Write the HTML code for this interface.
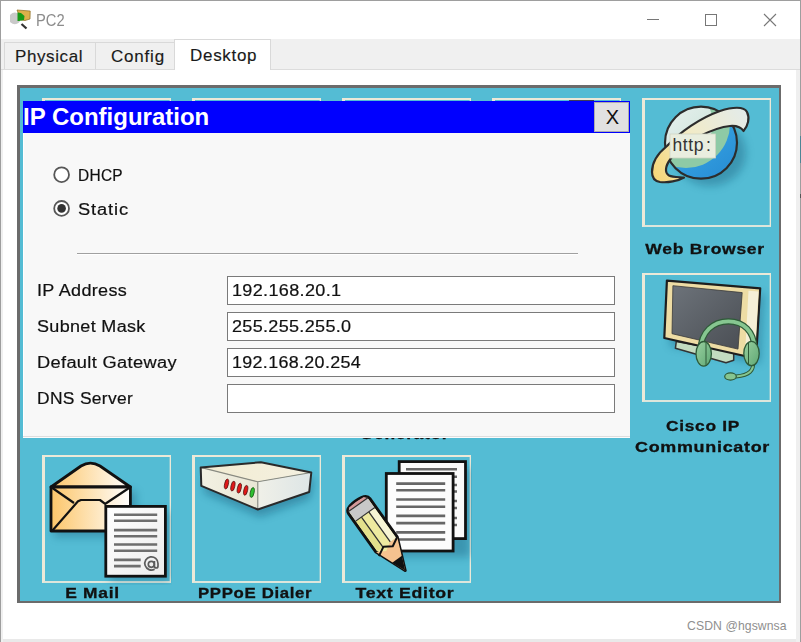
<!DOCTYPE html>
<html><head><meta charset="utf-8">
<style>
html,body{margin:0;padding:0;}
body{width:801px;height:642px;overflow:hidden;position:relative;background:#fff;font-family:"Liberation Sans",sans-serif;}
.a{position:absolute;}
#wl{left:0;top:0;width:1px;height:642px;background:#9e9e9e;}
#wt{left:0;top:0;width:801px;height:1px;background:#9e9e9e;}
#wr{left:800px;top:0;width:1px;height:642px;background:#9e9e9e;}
#wb{left:1px;top:639px;width:799px;height:3px;background:#e9e9e9;}
#wr2{left:796px;top:70px;width:4px;height:572px;background:#efefef;}
#wl2{left:1px;top:70px;width:2px;height:572px;background:#f0f0f0;}
#title{left:36px;top:12px;font-size:16px;color:#8c8c8c;transform:scaleX(0.92);transform-origin:0 50%;}
#tabbar{left:1px;top:39px;width:799px;height:31px;background:#f0f0f0;box-sizing:border-box;border-bottom:1px solid #dcdcdc;}
.tab{box-sizing:border-box;border:1px solid #d9d9d9;border-bottom:none;background:#f0f0f0;font-size:17px;color:#1a1a1a;letter-spacing:0.4px;-webkit-text-stroke:0.15px #1a1a1a;}
#content{left:1px;top:70px;width:799px;height:569px;background:#fff;}
#panel{left:17px;top:85px;width:764px;height:518px;box-sizing:border-box;border:2px solid #6b6b6b;border-left-width:3px;border-top-width:3px;background:#54bcd4;}
.fr{box-sizing:border-box;width:129px;height:129px;border:2px solid #ece9d8;border-left-width:3px;border-right-width:1px;border-bottom-color:#dde6dc;box-shadow:inset -1px 0 0 rgba(236,233,216,0.35);}
.lbl{font-weight:bold;font-size:15px;color:#111;letter-spacing:0.6px;text-align:center;white-space:nowrap;-webkit-text-stroke:0.3px #111;}
.lbl span{display:inline-block;transform-origin:50% 50%;}
#dlg{left:23px;top:101px;width:607px;height:336px;background:#f8f8f8;box-sizing:border-box;border-bottom:1px solid #dedede;box-shadow:0 1px 0 #fcfcfc, inset 1px 0 0 #fff;}
#dtitle{left:0;top:0;width:607px;height:32px;background:#0000ff;}
#dtt{left:0px;top:2px;font-size:24px;font-weight:bold;color:#fff;}
#xb{left:571px;top:1px;width:35px;height:30px;box-sizing:border-box;padding-left:2px;background:#e1e1e1;border:1px solid #adadad;font-size:20px;color:#111;text-align:center;line-height:29px;}
.rl{font-size:16px;color:#111;letter-spacing:0.3px;-webkit-text-stroke:0.2px #111;white-space:nowrap;transform-origin:0 50%;}
.inp{box-sizing:border-box;left:204px;width:388px;height:29px;background:#fff;border:1px solid #7a7a7a;font-size:16px;color:#111;padding-left:4px;line-height:27px;}
.inp span{display:inline-block;letter-spacing:0.3px;-webkit-text-stroke:0.2px #111;transform-origin:0 50%;}
</style></head><body>
<div class="a" id="content"></div>
<div class="a" id="wl"></div><div class="a" id="wt"></div><div class="a" id="wr"></div><div class="a" id="wb"></div><div class="a" id="wr2"></div><div class="a" id="wl2"></div><div class="a" style="left:800px;top:136px;width:1px;height:27px;background:#4d8595"></div><div class="a" style="left:800px;top:194px;width:1px;height:4px;background:#555"></div>
<!-- app icon -->
<svg class="a" style="left:10px;top:9px" width="22" height="22" viewBox="0 0 22 22">
  <circle cx="4.8" cy="9.4" r="5.8" fill="#c9c9c9"/>
  <line x1="11.5" y1="15" x2="16.5" y2="19.5" stroke="#333" stroke-width="2.3"/>
  <path d="M7,1 L20.2,2 L20,10 L15,11.5 L11,11 Z" fill="#dcb04a" stroke="#8a6a20" stroke-width="0.7"/>
  <path d="M7.5,3.5 L11,4 L14.5,7 L14,11 L9,12 L7.5,12 Z" fill="#169a16"/>
</svg>
<div class="a" id="title">PC2</div>
<!-- window controls -->
<div class="a" style="left:647px;top:19px;width:12px;height:1px;background:#777"></div>
<div class="a" style="left:705px;top:14px;width:12px;height:12px;box-sizing:border-box;border:1px solid #777"></div>
<svg class="a" style="left:763px;top:13px" width="14" height="14" viewBox="0 0 14 14"><path d="M1 1 L13 13 M13 1 L1 13" stroke="#777" stroke-width="1.1"/></svg>
<!-- tabs -->
<div class="a" id="tabbar"></div>
<div class="a tab" style="left:4px;top:42px;width:92px;height:27px;"><span class="a" style="left:10px;top:4px;letter-spacing:0.6px">Physical</span></div>
<div class="a tab" style="left:95px;top:42px;width:80px;height:27px;"><span class="a" style="left:15px;top:4px;letter-spacing:0.8px">Config</span></div>
<div class="a tab" style="left:174px;top:39px;width:97px;height:31px;background:#fff;"><span class="a" style="left:15px;top:6px;letter-spacing:0.7px">Desktop</span></div>

<!-- desktop panel -->
<div class="a" id="panel"></div>
<!-- frames row1 -->
<div class="a fr" style="left:42px;top:98px"></div>
<div class="a fr" style="left:192px;top:98px"></div>
<div class="a fr" style="left:342px;top:98px"></div>
<div class="a fr" style="left:492px;top:98px"></div>
<div class="a fr" style="left:642px;top:98px"></div>
<!-- row2 -->
<div class="a fr" style="left:642px;top:273px"></div>
<!-- row3 -->
<div class="a fr" style="left:42px;top:455px;height:128px"></div>
<div class="a fr" style="left:192px;top:455px;height:128px"></div>
<div class="a fr" style="left:342px;top:455px;height:128px"></div>


<!-- ICONS -->
<svg class="a" style="left:640px;top:96px" width="132" height="132" viewBox="0 0 132 132">
<defs>
 <clipPath id="gclip"><circle cx="61" cy="46.7" r="36"/></clipPath>
 <linearGradient id="gblue" x1="0.3" y1="0.3" x2="0.9" y2="1"><stop offset="0" stop-color="#3aa6e4"/><stop offset="1" stop-color="#1576c6"/></linearGradient>
 <linearGradient id="glight" x1="0" y1="0" x2="1" y2="1"><stop offset="0" stop-color="#f2f6f6"/><stop offset="1" stop-color="#c9e2d8"/></linearGradient>
 <linearGradient id="gsw" gradientUnits="userSpaceOnUse" x1="12" y1="81" x2="107" y2="16"><stop offset="0" stop-color="#f6d676"/><stop offset="0.5" stop-color="#f1ebc8"/><stop offset="1" stop-color="#e3ebea"/></linearGradient>
 <filter id="blur4" x="-50%" y="-50%" width="200%" height="200%"><feGaussianBlur stdDeviation="4"/></filter>
</defs>
<ellipse cx="70" cy="57" rx="36" ry="33" fill="#0b4f70" opacity="0.35" filter="url(#blur4)"/>
<g clip-path="url(#gclip)">
 <rect x="0" y="0" width="132" height="132" fill="url(#gblue)"/>
 <circle cx="46" cy="28" r="44" fill="#8ecaa6"/>
 <circle cx="41" cy="27" r="32" fill="url(#glight)"/>
</g>
<circle cx="61" cy="46.7" r="36" fill="none" stroke="#2c2c2c" stroke-width="2.2"/>
<path d="M12,76 C12,66 17,58 27,50 C40,36 60,22 80,15 C92,11 104,10 107,16 C110,22 108,30 103.5,35 C101,31 97,29.5 90,30 C80,31 70,35 60,40 C48,46 36,54 30.7,62.7 C25,70 24.5,77 29,79.5 C33,81.5 40,81 44,81.5 C38,85 28,87 20,86 C14,85 12,81 12,76 Z" fill="url(#gsw)" stroke="#2c2c2c" stroke-width="2.2" stroke-linejoin="round"/>
<rect x="30" y="38" width="45.5" height="24" fill="#e9eedf" stroke="#cfd4c4" stroke-width="0.8"/>
<text x="32.5" y="55.2" font-family="Liberation Sans" font-size="17.5" fill="#333" letter-spacing="0.6">http<tspan dx="2">:</tspan></text>
</svg>

<svg class="a" style="left:640px;top:272px" width="132" height="132" viewBox="0 0 132 132">
<defs>
 <linearGradient id="scr" x1="0" y1="0" x2="1" y2="1"><stop offset="0" stop-color="#6d737a"/><stop offset="1" stop-color="#4a4e54"/></linearGradient>
 <linearGradient id="hs" x1="0" y1="0" x2="1" y2="1"><stop offset="0" stop-color="#9ad0a0"/><stop offset="1" stop-color="#5fa874"/></linearGradient>
</defs>
<path d="M30,14 L124,22 L120,92 L30,74 Z" fill="#0b4f70" opacity="0.35" filter="url(#blur4)"/>
<path d="M36.3,69.4 L35.4,76.3 L86,90.8 L93.7,88.2 L93.7,80 Z" fill="#c2dcc0" stroke="#333" stroke-width="1.5" stroke-linejoin="round"/>
<path d="M26.9,8.6 L120.2,16.3 L116,86.5 L24.3,66 Z" fill="#eddca4" stroke="#1e1e1e" stroke-width="2.2" stroke-linejoin="round"/>
<path d="M108.5,18.8 L118.5,19.6 L114.7,84.6 L105,82.6 Z" fill="#f5efd6"/>
<path d="M32.9,13.7 L102.2,20.6 L98,77.1 L32,61.7 Z" fill="url(#scr)" stroke="#3a3a3a" stroke-width="0.8"/>
<path d="M60.5,78 C61,60 73,49.3 88.5,49.3 C104,49.3 114,60 114.5,76" fill="none" stroke="#2e5a38" stroke-width="6.2" stroke-linecap="round"/>
<path d="M60.5,78 C61,60 73,49.3 88.5,49.3 C104,49.3 114,60 114.5,76" fill="none" stroke="#86c690" stroke-width="3.8" stroke-linecap="round"/>
<path d="M113,90 C114,98 110,103 96,104.5" fill="none" stroke="#2e5a38" stroke-width="4"/>
<path d="M113,90 C114,98 110,103 96,104.5" fill="none" stroke="#86c690" stroke-width="2"/>
<ellipse cx="90.5" cy="104.5" rx="5.8" ry="3.6" fill="#86c690" stroke="#2e5a38" stroke-width="1.2"/>
<ellipse cx="63.7" cy="81.8" rx="7.7" ry="12.3" fill="url(#hs)" stroke="#2e5a38" stroke-width="1.3"/>
<path d="M66,71 L66,94" stroke="#2e5a38" stroke-width="1"/>
<ellipse cx="111.5" cy="81.5" rx="7.7" ry="12.2" fill="url(#hs)" stroke="#2e5a38" stroke-width="1.3"/>
<path d="M108.5,70.5 L108.5,93" stroke="#2e5a38" stroke-width="1"/>
</svg>

<svg class="a" style="left:40px;top:453px" width="132" height="132" viewBox="0 0 132 132">
<defs>
 <linearGradient id="env" x1="0" y1="0" x2="1" y2="0"><stop offset="0" stop-color="#fcc66a"/><stop offset="1" stop-color="#ffffff"/></linearGradient>
 <linearGradient id="doc" x1="0" y1="0" x2="1" y2="1"><stop offset="0" stop-color="#ffffff"/><stop offset="1" stop-color="#ececec"/></linearGradient>
</defs>
<path d="M14,38 L96,38 L96,84 L14,84 Z" fill="#0b4f70" opacity="0.35" filter="url(#blur4)"/>
<path d="M70,58 L130,58 L130,128 L70,128 Z" fill="#0b4f70" opacity="0.35" filter="url(#blur4)"/>
<path d="M11,34 L41,13 Q50.4,7.2 60,13 L90.4,34 Z" fill="url(#env)" stroke="#111" stroke-width="2.8" stroke-linejoin="round"/>
<rect x="11" y="34" width="79.4" height="44" fill="url(#env)" stroke="#111" stroke-width="2.8" stroke-linejoin="round"/>
<path d="M11,34 L34,50 M90.5,34 L65,51 M12,78 L38,48.3 L41,47 L60,47 L65.8,51.4" fill="none" stroke="#111" stroke-width="2.2" stroke-linejoin="round"/>
<rect x="65.8" y="53.4" width="59.6" height="69.8" fill="url(#doc)" stroke="#111" stroke-width="2.8"/>
<g stroke="#6e6e6e" stroke-width="2.6">
<path d="M74,61.7 H117.2 M74,67.8 H117.2 M74,77.1 H117.2 M74,83.3 H117.2 M74,91.5 H117.2 M74,97.7 H117.2 M74,106.9 H100.7 M74,113.1 H100.7"/>
</g>
<g fill="none" stroke="#5c5c5c" stroke-width="1.7"><path d="M114.6,116.2 A6.6,6.6 0 1 1 118,110.5 L118,113 Q118,115 116.2,115 Q114.4,115 114.4,113 L114.4,108"/><circle cx="111.3" cy="111.3" r="3"/></g>
</svg>

<svg class="a" style="left:190px;top:453px" width="132" height="132" viewBox="0 0 132 132">
<defs>
 <linearGradient id="ptop" x1="0" y1="0" x2="1" y2="0"><stop offset="0" stop-color="#f2ecd2"/><stop offset="1" stop-color="#f4f0e0"/></linearGradient>
 <linearGradient id="pfront" x1="0" y1="0" x2="1" y2="0"><stop offset="0" stop-color="#f3f1e2"/><stop offset="1" stop-color="#e8e6d6"/></linearGradient>
 <linearGradient id="pright" x1="0" y1="0" x2="1" y2="0"><stop offset="0" stop-color="#f0f0e8"/><stop offset="1" stop-color="#dde5e6"/></linearGradient>
</defs>
<path d="M14,22 L75,16 L124,26 L120,46 L70,64 L14,40 Z" fill="#0b4f70" opacity="0.4" filter="url(#blur4)"/>
<path d="M10.7,14.4 L70.9,9.25 L121.3,19.5 L67.8,28.8 Z" fill="url(#ptop)"/>
<path d="M10.7,14.4 L67.8,28.8 L67.8,56.5 L11.3,32.9 Z" fill="url(#pfront)"/>
<path d="M67.8,28.8 L121.3,19.5 L119.2,39 L67.8,56.5 Z" fill="url(#pright)"/>
<path d="M10.7,14.4 L67.8,28.8 L121.3,19.5 M67.8,28.8 L67.8,56.5" fill="none" stroke="#8a8a80" stroke-width="1.1"/>
<path d="M10.7,14.4 L70.9,9.25 L121.3,19.5 L119.2,39 L67.8,56.5 L11.3,32.9 Z" fill="none" stroke="#2a2a2a" stroke-width="2" stroke-linejoin="round"/>
<g stroke="#4a1010" stroke-width="0.7">
<ellipse cx="36.5" cy="31" rx="1.9" ry="5" fill="#e01818" transform="rotate(12 36.5 31)"/>
<ellipse cx="42.9" cy="33.1" rx="1.9" ry="5" fill="#e01818" transform="rotate(12 42.9 33.1)"/>
<ellipse cx="49.3" cy="35.2" rx="1.9" ry="5" fill="#e01818" transform="rotate(12 49.3 35.2)"/>
<ellipse cx="55.7" cy="37.3" rx="1.9" ry="5" fill="#e01818" transform="rotate(12 55.7 37.3)"/>
<ellipse cx="62.2" cy="39.5" rx="1.9" ry="5" fill="#2fc02f" stroke="#104a10" transform="rotate(12 62.2 39.5)"/>
</g>
</svg>

<svg class="a" style="left:340px;top:453px" width="132" height="132" viewBox="0 0 132 132">
<path d="M50,25 L130,14 L130,104 L50,104 Z" fill="#0b4f70" opacity="0.35" filter="url(#blur4)"/>
<rect x="59.2" y="8.6" width="66.3" height="77" fill="#fafafa" stroke="#111" stroke-width="2.8"/>
<g stroke="#666" stroke-width="2.6"><path d="M66,16.2 H117 M66,23.8 H117 M66,32 H117 M66,38.5 H117 M66,48 H117 M66,55 H117 M66,65 H117 M66,72 H117"/></g>
<rect x="46.3" y="20.5" width="66.8" height="77.5" fill="#fcfcfc" stroke="#111" stroke-width="2.8"/>
<g stroke="#666" stroke-width="2.6"><path d="M56.2,30.6 H105.2 M56.2,37.2 H105.2 M56.2,46.5 H105.2 M56.2,53.7 H105.2 M56.2,62.9 H105.2 M56.2,70.1 H105.2 M56.2,79.4 H105.2 M56.2,86.5 H105.2"/></g>
<g transform="translate(17,50) rotate(54.5)">
 <path d="M4,-13 L51,-13 L83,0 L51,13 L4,13 Q-2.5,13 -2.5,0 Q-2.5,-13 4,-13 Z" fill="#eeeaa0" stroke="#111" stroke-width="3" stroke-linejoin="round"/>
 <path d="M14,-11.5 L51,-11.5 L51,-4.5 L14,-4.5 Z" fill="#f6f4d4"/>
 <path d="M14,4.5 L51,4.5 L51,11.5 L14,11.5 Z" fill="#e4e08c"/>
 <path d="M14,-4.5 H51 M14,4.5 H51" stroke="#333" stroke-width="1.3"/>
 <path d="M2,-11.5 L14,-11.5 L14,11.5 L2,11.5 Z" fill="#c8c8c8"/>
 <path d="M-1,-9 Q-2,0 -1,9 L2,11.5 L2,-11.5 Z" fill="#d49a9a"/>
 <path d="M2,-12 L2,12 M14,-12 L14,12" stroke="#333" stroke-width="1.2"/>
 <path d="M51,-13 L83,0 L51,13 L56,4 L51,-4 Z" fill="#f5c28f"/>
 <path d="M51,-13 L56,-4 L51,4 L56,13" fill="none" stroke="#111" stroke-width="2" stroke-linejoin="round"/>
 <path d="M69,-6 L83,0 L69,6 Z" fill="#111"/>
</g>
</svg>

<div class="a" style="left:569px;top:100px;width:25px;height:1px;background:#3c3c58"></div>
<div class="a lbl" style="left:605px;top:240px;width:200px"><span style="transform:scaleX(1.169)">Web Browser</span></div>
<div class="a lbl" style="left:603px;top:417px;width:200px"><span style="transform:scaleX(1.155)">Cisco IP</span></div>
<div class="a lbl" style="left:603px;top:438px;width:200px"><span style="transform:scaleX(1.195)">Communicator</span></div>
<div class="a lbl" style="left:305px;top:425px;width:200px"><span style="transform:scaleX(1.16)">Generator</span></div>
<div class="a lbl" style="left:-8px;top:584px;width:200px"><span style="transform:scaleX(1.16)">E Mail</span></div>
<div class="a lbl" style="left:155px;top:584px;width:200px"><span style="transform:scaleX(1.119)">PPPoE Dialer</span></div>
<div class="a lbl" style="left:305px;top:584px;width:200px"><span style="transform:scaleX(1.181)">Text Editor</span></div>

<!-- dialog -->
<div class="a" id="dlg">
  <div class="a" id="dtitle"><div class="a" id="dtt">IP Configuration</div>
    <div class="a" id="xb">X</div></div>
  <!-- radios -->
  <svg class="a" style="left:28px;top:63px" width="22" height="22"><circle cx="10.6" cy="10.7" r="7.4" fill="#fff" stroke="#575757" stroke-width="1.8"/></svg>
  <div class="a rl" style="left:55px;top:66px;transform:scaleX(0.966)">DHCP</div>
  <svg class="a" style="left:28px;top:97px" width="22" height="22"><circle cx="10.6" cy="10.4" r="7.4" fill="#fff" stroke="#575757" stroke-width="1.8"/><circle cx="10.6" cy="10.4" r="4.3" fill="#333"/></svg>
  <div class="a rl" style="left:55px;top:100px;letter-spacing:0.8px;transform:scaleX(1.14)">Static</div>
  <div class="a" style="left:54px;top:152px;width:501px;height:1px;background:#a0a0a0"></div>
  <div class="a" style="left:54px;top:153px;width:501px;height:1px;background:#fff"></div>
  <div class="a rl" style="left:14px;top:181px;transform:scaleX(1.125)">IP Address</div>
  <div class="a rl" style="left:14px;top:217px;transform:scaleX(1.124)">Subnet Mask</div>
  <div class="a rl" style="left:14px;top:253px;transform:scaleX(1.139)">Default Gateway</div>
  <div class="a rl" style="left:14px;top:289px;transform:scaleX(1.088)">DNS Server</div>
  <div class="a inp" style="top:175px"><span style="transform:scaleX(1.127)">192.168.20.1</span></div>
  <div class="a inp" style="top:211px"><span style="transform:scaleX(1.124)">255.255.255.0</span></div>
  <div class="a inp" style="top:247px"><span style="transform:scaleX(1.118)">192.168.20.254</span></div>
  <div class="a inp" style="top:283px"></div>
</div>

<div class="a" style="left:687px;top:619px;font-size:12.2px;color:#8f8f8f;letter-spacing:0.1px">CSDN @hgswnsa</div>
</body></html>
